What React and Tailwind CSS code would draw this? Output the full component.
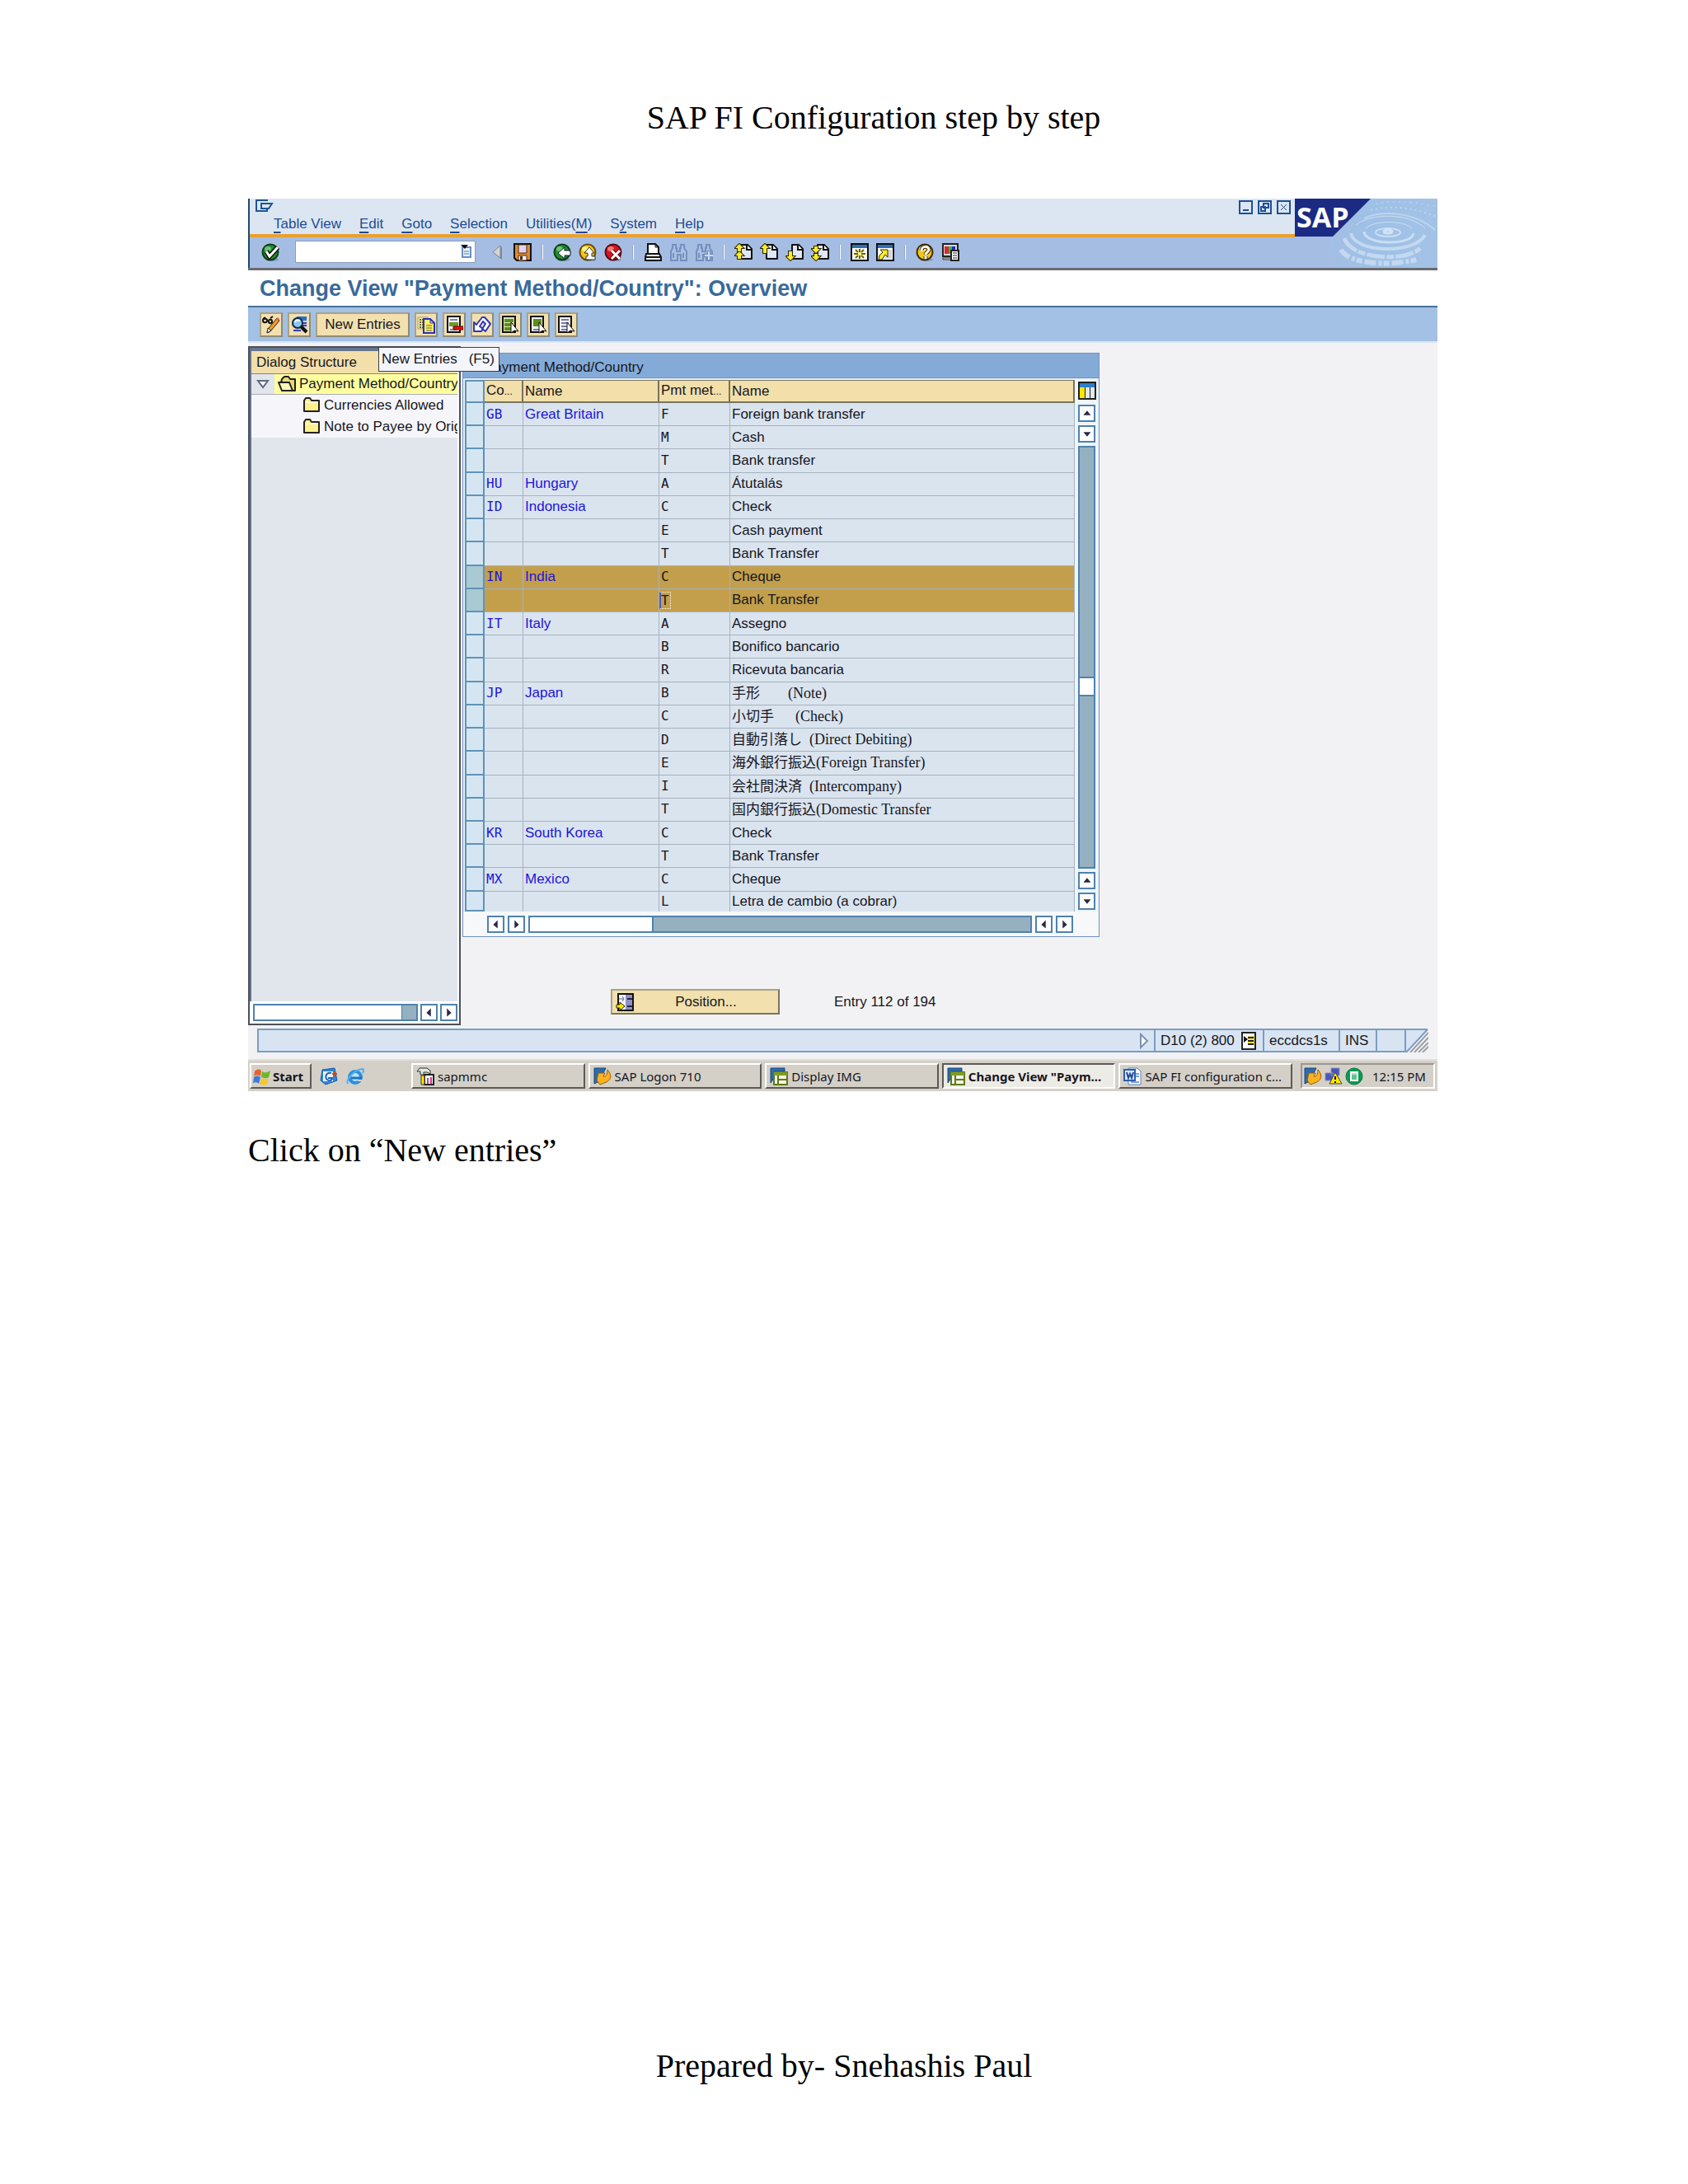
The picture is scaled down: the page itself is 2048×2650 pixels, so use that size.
import React from 'react';

const menus = [
  ['', 'T', 'able View'],
  ['', 'E', 'dit'],
  ['', 'G', 'oto'],
  ['', 'S', 'election'],
  ['Utilities(', 'M', ')'],
  ['S', 'y', 'stem'],
  ['', 'H', 'elp'],
];

const rows = [
  { code: 'GB', country: 'Great Britain', method: 'F', name: 'Foreign bank transfer' },
  { method: 'M', name: 'Cash' },
  { method: 'T', name: 'Bank transfer' },
  { code: 'HU', country: 'Hungary', method: 'A', name: 'Átutalás' },
  { code: 'ID', country: 'Indonesia', method: 'C', name: 'Check' },
  { method: 'E', name: 'Cash payment' },
  { method: 'T', name: 'Bank Transfer' },
  { code: 'IN', country: 'India', method: 'C', name: 'Cheque', selected: true },
  { method: 'T', name: 'Bank Transfer', selected: true, cursor: true },
  { code: 'IT', country: 'Italy', method: 'A', name: 'Assegno' },
  { method: 'B', name: 'Bonifico bancario' },
  { method: 'R', name: 'Ricevuta bancaria' },
  { code: 'JP', country: 'Japan', method: 'B', cjk: '手形　　', name: '(Note)' },
  { method: 'C', cjk: '小切手　', name: '  (Check)' },
  { method: 'D', cjk: '自動引落し', name: '  (Direct Debiting)' },
  { method: 'E', cjk: '海外銀行振込', name: '(Foreign Transfer)' },
  { method: 'I', cjk: '会社間決済', name: '  (Intercompany)' },
  { method: 'T', cjk: '国内銀行振込', name: '(Domestic Transfer' },
  { code: 'KR', country: 'South Korea', method: 'C', name: 'Check' },
  { method: 'T', name: 'Bank Transfer' },
  { code: 'MX', country: 'Mexico', method: 'C', name: 'Cheque' },
  { method: 'L', name: 'Letra de cambio (a cobrar)' },
];

const Icon = ({ children }) => (
  <svg viewBox="0 0 22 22" className="block h-[22px] w-[22px] shrink-0">
    {children}
  </svg>
);

/* Shared shapes */
const Page = () => (
  <>
    <path
      d="M8 2h8l5 5v12h-13z"
      fill="#dfe6f6"
      stroke="#111"
      strokeWidth="2"
      strokeLinejoin="round"
    />
    <path d="M15 2v6h6" fill="#fff" stroke="#111" strokeWidth="2" />
  </>
);

const Ball = ({ fill, shade, light }) => (
  <>
    <ellipse cx="13" cy="20" rx="8" ry="2" fill="#6f87b4" opacity="0.6" />
    <circle cx="11" cy="11" r="9.5" fill={fill} stroke={shade} strokeWidth="2" />
    <ellipse cx="8" cy="7" rx="4" ry="3" fill={light} />
  </>
);

const Binoculars = () => (
  <path
    d="M4 2h4v4h1v4h4v-4h1v-4h4v4l3 4v11h-7v-7h-4v7h-8v-11l2-4zM5 12v6M17 12v6"
    fill="#a9c0e4"
    stroke="#7590bd"
    strokeWidth="2"
  />
);

const Arrow = ({ d }) => (
  <path d={d} fill="#ffe92b" stroke="#2c2700" strokeWidth="2" paintOrder="stroke" />
);

const Cursor = () => (
  <path d="M12 8v13l4-3 5 1z" fill="#fff" stroke="#111" strokeLinejoin="round" />
);

const icons = {
  enter: (
    <Icon>
      <Ball fill="#1f8f2d" shade="#0d3f16" light="#6cc46e" />
      <path d="M6 10l4 6 10-11" fill="none" stroke="#111" strokeWidth="6" />
      <path d="M6 10l4 6 10-11" fill="none" stroke="#fff" strokeWidth="3" />
    </Icon>
  ),
  collapse: (
    <Icon>
      <path d="M17 4v16l-10-8z" fill="#7d8894" />
      <path d="M15 3v15l-9-7z" fill="#d6d6d0" stroke="#7f858f" />
    </Icon>
  ),
  save: (
    <Icon>
      <path d="M1 1h20v20h-17l-3-3z" fill="#e08a2c" stroke="#111" strokeWidth="2" />
      <path d="M6 2h10v10h-10z" fill="#e3d3ea" stroke="#4a2a10" />
      <path d="M6 15h10v6h-10z" fill="#f3eef5" stroke="#4a2a10" />
      <path d="M8 16h3v4h-3z" fill="#4a2a10" />
    </Icon>
  ),
  back: (
    <Icon>
      <Ball fill="#1f8f2d" shade="#0d3f16" light="#6cc46e" />
      <path d="M6 12l8-7v4h7v6h-7v4z" fill="#fff" stroke="#123" strokeWidth="1" />
    </Icon>
  ),
  exit: (
    <Icon>
      <Ball fill="#f3c517" shade="#6b4a0a" light="#fff08a" />
      <path d="M13 5l6 7h-3v4h4v4h-11v-4h2v-4h-4z" fill="#fff" stroke="#332" />
    </Icon>
  ),
  cancel: (
    <Icon>
      <Ball fill="#d81420" shade="#5c0a10" light="#f47a72" />
      <path d="M9 9l10 10M19 9l-10 10" stroke="#5c0a10" strokeWidth="5" />
      <path d="M9 9l10 10M19 9l-10 10" stroke="#fff" strokeWidth="3" />
    </Icon>
  ),
  print: (
    <Icon>
      <path d="M5 13v-12h9l4 4v8" fill="#fff" stroke="#111" strokeWidth="2" />
      <path d="M14 1v4h4" fill="none" stroke="#111" />
      <path d="M3 13h16l2 4v4h-19v-4z" fill="#f5f5f5" stroke="#111" strokeWidth="2" />
      <path d="M2 17h18" stroke="#111" strokeWidth="2" />
    </Icon>
  ),
  find: (
    <Icon>
      <Binoculars />
    </Icon>
  ),
  findNext: (
    <Icon>
      <Binoculars />
      <path d="M17 9v12M11 15h11" stroke="#7590bd" strokeWidth="5" />
      <path d="M17 10v10M12 15h10" stroke="#cddaf0" strokeWidth="2" />
    </Icon>
  ),
  firstPage: (
    <Icon>
      <Page />
      <Arrow d="M6 10l5 5h-3v4h-4v-4h-3z" />
      <Arrow d="M6 1l5 5h-3v4h-4v-4h-3z" />
    </Icon>
  ),
  prevPage: (
    <Icon>
      <Page />
      <Arrow d="M6 1l5 5h-3v6h-4v-6h-3z" />
    </Icon>
  ),
  nextPage: (
    <Icon>
      <Page />
      <Arrow d="M6 21l5-5h-3v-6h-4v6h-3z" />
    </Icon>
  ),
  lastPage: (
    <Icon>
      <Page />
      <Arrow d="M6 12l5-5h-3v-3h-4v3h-3z" />
      <Arrow d="M6 21l5-5h-3v-3h-4v3h-3z" />
    </Icon>
  ),
  session: (
    <Icon>
      <path d="M1 1h20v20h-20z" fill="#fffef0" stroke="#111" strokeWidth="2" />
      <path d="M2 2h18v4h-18z" fill="#2f6fb4" />
      <path d="M11 7v4M11 15v4M4 13h5M13 13h5M6 8l3 3M13 15l3 3M16 8l-3 3M9 15l-3 3" stroke="#6b6300" strokeWidth="2" />
      <path d="M9 11h4v4h-4z" fill="#fff27a" />
    </Icon>
  ),
  shortcut: (
    <Icon>
      <path d="M1 1h20v20h-20z" fill="#fff" stroke="#111" strokeWidth="2" />
      <path d="M2 2h18v4h-18z" fill="#2f6fb4" />
      <path d="M14 8h5v11h-8v-3h3z" fill="#d4d6da" />
      <path d="M5 8h9v9l-3-3-4 6h-4l1-5 4-4z" fill="#ffe92b" stroke="#332c00" />
    </Icon>
  ),
  help: (
    <Icon>
      <Ball fill="#f5c61a" shade="#3d2c04" light="#fff08a" />
      <path
        d="M7 9c0-6 9-6 9-1 0 3-4 3-4 6M12 16v3"
        fill="none"
        stroke="#3d2c04"
        strokeWidth="5"
      />
      <path
        d="M7 9c0-6 9-6 9-1 0 3-4 3-4 6M12 16v3"
        fill="none"
        stroke="#fff"
        strokeWidth="3"
      />
    </Icon>
  ),
  layout: (
    <Icon>
      <path d="M2 1h18v15h-18z" fill="#d6d9dd" stroke="#222" strokeWidth="2" />
      <path d="M4 4h5v9h-5z" fill="#e0252b" />
      <path d="M9 4h4v9h-4z" fill="#1fc43a" />
      <path d="M13 4h4v9h-4z" fill="#2222e0" />
      <path d="M2 18h11v2h-11z" fill="#e6e6e6" stroke="#333" />
      <path d="M12 9h9v12h-9z" fill="#fff" stroke="#222" strokeWidth="2" />
      <path d="M14 12h5M14 15h5M14 18h5" stroke="#222" />
    </Icon>
  ),
  change: (
    <Icon>
      <path
        d="M1 4l3-2M1 6c0-3 5-3 5 0s-5 3-5 0M8 7c0-3 4-3 4 0s-4 3-4 0M10 3l3-2"
        fill="none"
        stroke="#111"
        strokeWidth="2"
      />
      <path d="M18 3l3 3-10 12-4 3-1-1 2-5z" fill="#f39a2b" stroke="#222" />
      <path d="M17 4l3 3 1-3-2-2z" fill="#e25b5b" />
      <path d="M7 15l4 3-5 3z" fill="#fff" stroke="#222" />
    </Icon>
  ),
  details: (
    <Icon>
      <path d="M6 1h15v19h-15z" fill="#d8d3d4" />
      <path d="M8 1h12v5h-12z" fill="#2a72c8" />
      <path d="M15 9h5M15 12h5M4 18h9" stroke="#3a3fb5" strokeWidth="2" />
      <circle cx="9" cy="9" r="6" fill="#8dc8ee" stroke="#14284a" strokeWidth="2" />
      <path d="M6 8c1-3 4-3 6-2" fill="none" stroke="#fff" strokeWidth="2" />
      <path d="M13 13l7 7" stroke="#111" strokeWidth="4" />
    </Icon>
  ),
  copy: (
    <Icon>
      <path d="M1 2h12v14h-12z" fill="#f7f0a0" stroke="#a39a60" />
      <path d="M3 5h6M3 8h5M3 11h5M3 14h5" stroke="#6a6238" strokeWidth="2" strokeDasharray="2 1" />
      <path d="M8 4h8l5 5v12h-13z" fill="#fbf25e" stroke="#2730c8" strokeWidth="2" />
      <path d="M16 4v5h5" fill="none" stroke="#2730c8" />
      <path d="M11 12h7M11 15h7M11 18h7" stroke="#6a6238" />
    </Icon>
  ),
  remove: (
    <Icon>
      <path d="M3 1h15v19h-15z" fill="#f4f4fb" stroke="#111" strokeWidth="2" />
      <path d="M6 5h9" stroke="#8086b5" strokeWidth="2" />
      <path d="M5 8h11v5h-11z" fill="#6f9a1e" />
      <path d="M6 17h8" stroke="#8086b5" strokeWidth="2" />
      <path d="M10 13h12v4h-12z" fill="#e31212" stroke="#6d0505" />
    </Icon>
  ),
  undo: (
    <Icon>
      <path
        d="M1 19v-11l3 3 7-9h3l7 8-6 9-4-3 4-6-3-3-4 6 4 3-2 3z"
        fill="#fff"
        stroke="#3236b5"
        strokeWidth="2"
        strokeLinejoin="round"
      />
    </Icon>
  ),
  selectAll: (
    <Icon>
      <path d="M2 1h15v19h-15z" fill="#dfe7c0" stroke="#111" strokeWidth="2" />
      <path d="M4 4h11v4h-11zM4 9h11v4h-11zM4 14h11v4h-11z" fill="#5e8f16" />
      <Cursor />
    </Icon>
  ),
  selectBlock: (
    <Icon>
      <path d="M2 1h15v19h-15z" fill="#f1f2fa" stroke="#111" strokeWidth="2" />
      <path d="M5 4h10v9h-10z" fill="#5e8f16" />
      <path d="M5 17h7" stroke="#777da8" strokeWidth="2" />
      <Cursor />
    </Icon>
  ),
  deselect: (
    <Icon>
      <path d="M2 1h15v19h-15z" fill="#f1f2fa" stroke="#111" strokeWidth="2" />
      <path d="M5 5h9M5 9h9M5 13h7M5 17h7" stroke="#777da8" strokeWidth="2" />
      <Cursor />
    </Icon>
  ),
  columns: (
    <Icon>
      <path d="M0 0h22v22h-22z" fill="#222" />
      <path d="M2 2h18v5h-18z" fill="#2f7fc9" />
      <path d="M2 7h6v13h-6z" fill="#ffe600" />
      <path d="M9 7h5v13h-5zM15 7h5v13h-5z" fill="#e3e6ea" />
    </Icon>
  ),
  position: (
    <Icon>
      <path d="M3 1h18v20h-18z" fill="#8f90c4" stroke="#111" strokeWidth="2" />
      <path d="M4 2h8v18h-8z" fill="#f2f3fa" />
      <path d="M4 7h6l-2-3M10 7l-2 3" fill="none" stroke="#667" />
      <path d="M14 7h6M14 16h6" stroke="#22244d" strokeWidth="2" />
      <path d="M1 14h4v-3l6 5-6 5v-3h-4z" fill="#ffe600" stroke="#222" />
    </Icon>
  ),
  folder: (
    <Icon>
      <path
        d="M2 18v-13l2-3h5l2 3h9v13z"
        fill="#fff08c"
        stroke="#222"
        strokeWidth="2"
        strokeLinejoin="round"
      />
      <path d="M4 7h14" stroke="#fffbd0" strokeWidth="2" />
    </Icon>
  ),
  folderOpen: (
    <Icon>
      <path
        d="M4 9l1-4 3-3h5l2 3h6v14h-3"
        fill="#e9d978"
        stroke="#222"
        strokeWidth="2"
        strokeLinejoin="round"
      />
      <path
        d="M1 9h13l4 10h-13z"
        fill="#fff9b8"
        stroke="#222"
        strokeWidth="2"
        strokeLinejoin="round"
      />
    </Icon>
  ),
  windows: (
    <Icon>
      <path d="M2 5c3-3 5-3 8-1l-1 7c-3-2-5-2-8 0z" fill="#e8622c" />
      <path d="M11 5c3 2 6 2 10-1l-2 8c-3 2-6 1-9 0z" fill="#6fb52c" />
      <path d="M1 12c3-2 5-2 8 0l-2 8c-2-2-4-2-7-1z" fill="#3b7be0" />
      <path d="M10 13c3 1 5 2 9 0l-2 7c-3 2-5 2-9 0z" fill="#f6c62c" />
    </Icon>
  ),
  outlook: (
    <Icon>
      <path d="M3 3l15-2 3 15-14 5-6-5z" fill="#2f85d3" stroke="#1b5ea8" />
      <path d="M4 5h12v12h-12z" fill="#e8f3fc" />
      <path d="M14 7c-8-2-9 9-2 9 2 0 3-1 3-3h-5" fill="none" stroke="#1b66b8" strokeWidth="2" />
      <path d="M18 5v6M15 8h6" stroke="#b4542c" strokeWidth="2" />
    </Icon>
  ),
  explorer: (
    <Icon>
      <circle cx="11" cy="12" r="7" fill="#bfe3fa" stroke="#2b8fdd" strokeWidth="4" />
      <path d="M6 13h13" stroke="#1c74c4" strokeWidth="3" />
      <path d="M14 15h7v2h-7z" fill="#d4d0c8" />
      <path d="M2 20c-3-6 10-18 18-18 2 1 1 3 0 5" fill="none" stroke="#56b0ec" strokeWidth="2" />
    </Icon>
  ),
  tools: (
    <Icon>
      <path d="M1 5l3-4h9l4 3v4l-4-2h-4v3h-4v-4z" fill="#e4e4e0" stroke="#333" />
      <path d="M10 9h11v12h-11z" fill="#fff" stroke="#222" strokeWidth="2" />
      <path d="M14 13v7M18 12v8" stroke="#d33a8a" strokeWidth="2" />
      <path d="M6 10h4v11h-4z" fill="#ffe600" stroke="#333" />
    </Icon>
  ),
  logon: (
    <Icon>
      <path d="M1 1h14l-8 16-6 3z" fill="#2d6bab" stroke="#184a80" />
      <path
        d="M6 7h8l-2 4c3 1 5-2 5-8 6 7 5 13-4 16l-5 2-4-5z"
        fill="#fbb21e"
        stroke="#9b5d06"
      />
    </Icon>
  ),
  sapWindow: (
    <Icon>
      <path d="M1 1h17v4h-13v8l-4 6z" fill="#2d6bab" stroke="#184a80" />
      <path d="M5 6h16v15h-16z" fill="#f6f7e6" stroke="#5d7a17" strokeWidth="2" />
      <path d="M5 6h16v4h-16z" fill="#7d9c26" />
      <path d="M10 10v11M10 15h11" stroke="#5d7a17" strokeWidth="2" />
    </Icon>
  ),
  word: (
    <Icon>
      <path d="M6 1h11l4 4v16h-15z" fill="#fff" stroke="#5b80bd" />
      <path d="M13 8h6M13 11h6M9 18h10" stroke="#7ea0d4" strokeWidth="2" />
      <path d="M1 3h13v13h-13z" fill="#dfeafa" stroke="#2b5fae" strokeWidth="2" />
      <path d="M4 6l2 7 2-5 2 5 2-7" fill="none" stroke="#1d4a94" strokeWidth="2" />
    </Icon>
  ),
  network: (
    <Icon>
      <path d="M8 1h10v9h-10zM1 7h10v9h-10z" fill="#4a55b8" stroke="#8a90c8" />
      <path d="M13 6l8 14h-15z" fill="#ffe600" stroke="#444" />
      <path d="M13 11v4M13 17v2" stroke="#111" strokeWidth="2" />
    </Icon>
  ),
  server: (
    <Icon>
      <circle cx="11" cy="11" r="10" fill="#0d9a52" stroke="#087a3e" />
      <path d="M7 6h8v10h-8z" fill="#5fc48e" stroke="#fff" strokeWidth="2" />
      <path d="M7 8h8" stroke="#fff" />
    </Icon>
  ),
};

const IconButton = ({ name }) => (
  <button type="button" aria-label={name} className="block">
    {icons[name]}
  </button>
);

const ToolButton = ({ name }) => (
  <button
    type="button"
    aria-label={name}
    className="flex h-[30px] w-7 items-center justify-center border-2 border-[#8f8a78] border-t-[#a9a28a] border-l-[#a9a28a] bg-[#f2e0ae]"
  >
    {icons[name]}
  </button>
);

const Separator = () => (
  <span className="mx-[3px] h-[18px] w-0.5 border-r border-white bg-[#98a5bd]" />
);

const arrows = {
  up: 'M5 12l5-6 5 6z',
  down: 'M5 7l5 6 5-6z',
  left: 'M12 4v11l-6-5z',
  right: 'M7 4v11l6-5z',
};

const ScrollButton = ({ dir }) => (
  <button
    type="button"
    aria-label={`Scroll ${dir}`}
    className="h-[21px] w-[21px] shrink-0 border-2 border-[#4f82ad] bg-white"
  >
    <svg viewBox="0 0 19 19" className="block h-[17px] w-[17px]">
      <path d={arrows[dir]} fill="#2a2a44" />
    </svg>
  </button>
);

const Ripples = () => (
  <svg
    viewBox="0 0 173 84"
    className="block h-[84px] w-[173px] shrink-0"
    role="img"
    aria-label="SAP"
  >
    <defs>
      <linearGradient id="water" x1="0" y1="0" x2="1" y2="0">
        <stop offset="0.2" stopColor="#a5bde3" />
        <stop offset="0.5" stopColor="#9fc0e6" />
        <stop offset="1" stopColor="#a3c2e6" />
      </linearGradient>
    </defs>
    <rect width="173" height="84" fill="url(#water)" />
    <g fill="none" stroke="#e6f2fc">
      <ellipse cx="113" cy="40" rx="5" ry="2" strokeWidth="3" opacity="0.7" />
      <ellipse cx="113" cy="41" rx="15" ry="5" strokeWidth="2" opacity="0.6" />
      <path d="M84 40c0 16 58 18 60 2" strokeWidth="3" opacity="0.6" />
      <path d="M86 36c10-10 46-10 56 0" strokeWidth="1" opacity="0.6" />
      <path d="M68 42c4 24 78 26 90 2" strokeWidth="4" opacity="0.5" />
      <path
        d="M60 48c10 28 78 28 92 12"
        strokeWidth="5"
        opacity="0.5"
        strokeDasharray="22 2 9 2"
      />
      <path
        d="M56 62c10 18 60 20 92 12"
        strokeWidth="6"
        opacity="0.5"
        strokeDasharray="14 3 4 2 7 3"
      />
      <path d="M74 32c16-14 64-16 84 4" strokeWidth="1" opacity="0.6" />
      <path d="M84 24c20-10 60-9 86 14" strokeWidth="2" opacity="0.4" />
      <path d="M92 14c24-6 50-4 80 8" strokeWidth="2" opacity="0.4" strokeDasharray="2 4" />
      <path d="M98 6c24-4 50-2 74 4" strokeWidth="2" opacity="0.3" strokeDasharray="2 5" />
    </g>
    <path d="M0 0h92l-46 46h-46z" fill="#1b2a83" />
    <text
      x="2"
      y="35"
      fill="#fff"
      fontFamily="'Open Sans', sans-serif"
      fontSize="34"
      fontWeight="700"
    >
      SAP
    </text>
  </svg>
);

const Header = () => (
  <header className="flex border-l-2 border-[#1d4a70] bg-[#a5bde3]">
    <div className="flex-1">
      <div className="flex h-[47px] justify-between border-b-4 border-[#e9a12f] bg-[#dbe6f2]">
        <div>
          <svg viewBox="0 0 24 17" className="ml-1.5 block h-[17px] w-6">
            <path
              d="M15 3v-1h-13v13h13v-2M8 6h13l-4 6h-9z"
              fill="none"
              stroke="#1f5592"
              strokeWidth="2"
            />
          </svg>
          <nav className="ml-[29px] flex gap-[22px] text-[17px] leading-7 text-[#1d4b94]">
            {menus.map(([before, key, after]) => (
              <button key={before + key + after} type="button" className="block">
                {before}
                <span className="underline decoration-2 underline-offset-4">{key}</span>
                {after}
              </button>
            ))}
          </nav>
        </div>
        <div className="mt-0.5 mr-[5px] flex gap-1.5">
          <button type="button" aria-label="Minimize" className="h-[17px] w-[17px] border-2 border-[#1f4f92]">
            <svg viewBox="0 0 13 13" className="block h-[13px] w-[13px]">
              <path d="M3 9h7v2h-7z" fill="#1f4f92" />
            </svg>
          </button>
          <button type="button" aria-label="Restore" className="h-[17px] w-[17px] border-2 border-[#1f4f92]">
            <svg viewBox="0 0 13 13" className="block h-[13px] w-[13px]">
              <path d="M5 2h6v5h-6zM2 6h5v5h-5z" fill="none" stroke="#1f4f92" strokeWidth="2" />
            </svg>
          </button>
          <button type="button" aria-label="Close" className="h-[17px] w-[17px] border-2 border-[#1f4f92]">
            <svg viewBox="0 0 13 13" className="block h-[13px] w-[13px]">
              <path d="M3 3l7 7M10 3l-7 7" stroke="#1f4f92" />
            </svg>
          </button>
        </div>
      </div>
      <div className="flex h-[37px] items-center gap-[9px] pb-0.5 pl-3.5">
        <IconButton name="enter" />
        <div className="relative mr-1.5 ml-2.5">
          <input
            type="text"
            aria-label="Command"
            className="block h-[27px] w-[219px] border border-[#8c9bb5] bg-white px-1 text-[17px]"
          />
          <button type="button" aria-label="History" className="absolute top-1 right-1">
            <svg viewBox="0 0 16 18" className="block h-[18px] w-4">
              <path d="M4 4h10v12h-10z" fill="#eaf1fa" stroke="#6a8fc0" strokeWidth="2" />
              <path d="M6 9h6M6 12h6" stroke="#4878b4" />
              <path d="M2 1h9l-4 5z" fill="#111" />
            </svg>
          </button>
        </div>
        <IconButton name="collapse" />
        <IconButton name="save" />
        <Separator />
        <IconButton name="back" />
        <IconButton name="exit" />
        <IconButton name="cancel" />
        <Separator />
        <IconButton name="print" />
        <IconButton name="find" />
        <IconButton name="findNext" />
        <Separator />
        <IconButton name="firstPage" />
        <IconButton name="prevPage" />
        <IconButton name="nextPage" />
        <IconButton name="lastPage" />
        <Separator />
        <IconButton name="session" />
        <IconButton name="shortcut" />
        <Separator />
        <IconButton name="help" />
        <IconButton name="layout" />
      </div>
    </div>
    <Ripples />
  </header>
);

const DialogStructure = () => (
  <aside className="flex w-[258px] shrink-0 flex-col border-2 border-[#4c5058] bg-white pr-0.5">
    <div className="flex flex-1 flex-col border-t-4 border-l-2 border-[#66758f] bg-[#e1e5ec]">
      <h2 className="h-7 border-b border-[#8d8672] bg-[#f2dfaa] pl-1.5 leading-7">
        Dialog Structure
      </h2>
      <ul>
        <li className="flex h-[25px] items-center border-b border-[#a9acb2]">
          <button type="button" aria-label="Collapse" className="flex w-7 justify-center">
            <svg viewBox="0 0 16 12" className="h-3 w-4">
              <path d="M2 2h12l-6 8z" fill="#fff" stroke="#5c6a80" strokeWidth="2" />
            </svg>
          </button>
          <a
            href="#method"
            className="flex h-6 w-0 flex-1 items-center gap-1 overflow-hidden bg-[#ffff9e] pl-1 whitespace-nowrap"
          >
            {icons.folderOpen}
            Payment Method/Country
          </a>
        </li>
        {['Currencies Allowed', 'Note to Payee by Origin'].map((item) => (
          <li key={item} className="flex h-[26px] bg-[#f6f6fa]">
            <a
              href="#node"
              className="flex w-0 flex-1 items-center gap-1 overflow-hidden pl-[62px] whitespace-nowrap"
            >
              {icons.folder}
              {item}
            </a>
          </li>
        ))}
      </ul>
    </div>
    <div className="flex h-[27px] items-center gap-[3px] pl-1">
      <div className="flex h-[21px] flex-1 justify-end border-2 border-[#4f82ad] bg-white">
        <div className="w-[18px] border-l border-[#4f82ad] bg-[#95b1c1]" />
      </div>
      <ScrollButton dir="left" />
      <ScrollButton dir="right" />
    </div>
  </aside>
);

const headCell =
  'border-r-2 border-b-2 border-[#77745f] border-t border-t-[#77745f] bg-[#f2dfaa] p-0 pl-0.5 text-left font-normal';

const MethodTable = () => (
  <table className="h-[645px] w-full flex-1 table-fixed border-separate border-spacing-0">
    <colgroup>
      <col className="w-6" />
      <col className="w-[47px]" />
      <col className="w-[165px]" />
      <col className="w-[86px]" />
      <col />
    </colgroup>
    <thead>
      <tr className="h-[27px]">
        <th className="border-2 border-[#5f93b8] bg-[#d5e6f2] p-0" aria-label="Select" />
        <th className={headCell}>
          Co<span className="text-[12px]">...</span>
        </th>
        <th className={headCell}>Name</th>
        <th className={headCell}>
          Pmt met<span className="text-[12px]">...</span>
        </th>
        <th className={headCell}>Name</th>
      </tr>
    </thead>
    <tbody>
      {rows.map((row, i) => {
        const last = i === rows.length - 1;
        const cell = `border-r border-[#a6b2bd] p-0 pl-0.5 ${last ? '' : 'border-b'}`;
        return (
          <tr
            key={i}
            className={`${last ? 'h-6' : 'h-7'} ${row.selected ? 'bg-[#c39f4b]' : 'bg-[#dae4ef]'}`}
          >
            <td
              className={`border-x-2 border-b-2 border-[#5f93b8] p-0 ${
                row.selected ? 'bg-[#a9cad3]' : 'bg-[#d5e6f2]'
              }`}
            />
            <td className={`${cell} font-['DejaVu_Sans_Mono',monospace] text-[16px] text-[#2014dc]`}>
              {row.code}
            </td>
            <td className={`${cell} text-[#2014dc]`}>{row.country}</td>
            {row.cursor ? (
              <td className="border-r border-b border-[#a6b2bd] p-0 font-['DejaVu_Sans_Mono',monospace] text-[16px]">
                <span className="block h-[21px] w-3.5 border border-l-2 border-dotted border-white border-l-[#3f5fc0] leading-[19px] [border-left-style:solid]">
                  {row.method}
                </span>
              </td>
            ) : (
              <td className={`${cell} font-['DejaVu_Sans_Mono',monospace] text-[16px]`}>
                {row.method}
              </td>
            )}
            {row.cjk ? (
              <td className={`${cell} font-['Liberation_Serif','Noto_Sans_CJK_JP',serif] whitespace-pre`}>
                {row.cjk}
                <span className="text-[18px]">{row.name}</span>
              </td>
            ) : (
              <td className={cell}>{row.name}</td>
            )}
          </tr>
        );
      })}
    </tbody>
  </table>
);

const TablePanel = () => (
  <section className="w-[773px] border border-[#6f93b8] bg-[#f6f8fa]">
    <h2 className="h-[30px] border-b border-[#6f93b8] bg-[#84abd8] pl-[26px] leading-[34px]">
      Payment Method/Country
    </h2>
    <div className="flex bg-[#e4effa] pt-0.5 pl-0.5">
      <MethodTable />
      <div className="flex w-[29px] flex-col items-center gap-1 bg-[#eef5fb]">
        <div className="mt-0.5 mb-0.5">
          <IconButton name="columns" />
        </div>
        <ScrollButton dir="up" />
        <ScrollButton dir="down" />
        <div className="w-[21px] flex-1 border-2 border-[#4f82ad] bg-[#95b1c1] pt-[278px]">
          <div className="h-6 border-y-2 border-[#4f82ad] bg-white" />
        </div>
        <ScrollButton dir="up" />
        <ScrollButton dir="down" />
        <span className="-mt-0.5" />
      </div>
    </div>
    <div className="flex h-[30px] items-center gap-1 pr-[31px] pl-[29px]">
      <ScrollButton dir="left" />
      <ScrollButton dir="right" />
      <div className="flex h-[21px] flex-1 border-2 border-[#4f82ad] bg-[#95b1c1]">
        <div className="w-[150px] border-r-2 border-[#4f82ad] bg-white" />
      </div>
      <ScrollButton dir="left" />
      <ScrollButton dir="right" />
    </div>
  </section>
);

const statusCell = 'flex items-center border-l-2 border-[#7b9cc4] pl-1.5';

const StatusBar = () => (
  <div className="mt-1 flex h-[29px] pr-[11px] pl-[11px]">
    <div className="flex flex-1 border-y-2 border-l-2 border-[#7b9cc4] bg-[#d8e4f1]">
      <div className="flex flex-1 items-center justify-end pr-1.5">
        <svg viewBox="0 0 12 20" className="h-5 w-3">
          <path d="M2 2v16l8-8z" fill="#fff" stroke="#7b93b5" strokeWidth="2" />
        </svg>
      </div>
      <div className={`${statusCell} w-[132px] gap-2`}>
        D10 (2) 800
        <svg viewBox="0 0 18 22" className="h-[22px] w-[18px]">
          <path d="M1 1h16v20h-16z" fill="#fff" stroke="#222" strokeWidth="2" />
          <path d="M8 5h8v11h-8z" fill="#f4e34a" />
          <path d="M8 7h7M8 11h7M8 15h7" stroke="#222" strokeWidth="2" />
          <path d="M3 5v8l5-4z" fill="#111" />
        </svg>
      </div>
      <div className={`${statusCell} w-[92px]`}>eccdcs1s</div>
      <div className={`${statusCell} w-[45px]`}>INS</div>
      <div className={`${statusCell} w-[35px]`} />
    </div>
    <svg viewBox="0 0 29 29" className="h-[29px] w-[29px]">
      <path d="M0 0h28l-26 29h-2z" fill="#d8e4f1" />
      <path d="M0 1h28M1 0v28h2L28 1" fill="none" stroke="#7b9cc4" strokeWidth="2" />
      <path d="M7 29L29 5M12 29L29 11M17 29L29 17M22 29L29 22" stroke="#9aa0a8" strokeWidth="2" />
    </svg>
  </div>
);

const tasks = [
  { icon: 'tools', label: 'sapmmc' },
  { icon: 'logon', label: 'SAP Logon 710' },
  { icon: 'sapWindow', label: 'Display IMG' },
  { icon: 'sapWindow', label: 'Change View "Paym...', active: true },
  { icon: 'word', label: 'SAP FI configuration c...' },
];

const Taskbar = () => (
  <div className="mt-2 flex h-[39px] items-center border-t-2 border-[#e2e0da] bg-[#d4d0c8] pr-[3px] pl-0.5 font-['Noto_Sans',sans-serif] text-[15px]">
    <button
      type="button"
      className="flex h-[31px] w-[75px] items-center gap-0.5 border-2 border-[#5c5a56] border-t-white border-l-white pl-0.5 font-bold"
    >
      {icons.windows}
      Start
    </button>
    <div className="ml-2.5 flex w-[111px] gap-2.5">
      <IconButton name="outlook" />
      <IconButton name="explorer" />
    </div>
    <div className="flex flex-1 gap-1">
      {tasks.map((task) => (
        <button
          key={task.label}
          type="button"
          className={`flex h-[31px] w-0 flex-1 items-center gap-1 overflow-hidden border-2 pl-1 whitespace-nowrap ${
            task.active
              ? 'border-white border-t-[#5c5a56] border-l-[#5c5a56] bg-[#edebe6] font-bold'
              : 'border-[#5c5a56] border-t-white border-l-white'
          }`}
        >
          {icons[task.icon]}
          {task.label}
        </button>
      ))}
    </div>
    <div className="ml-2.5 flex h-[31px] w-[163px] items-center gap-[3px] border-2 border-white border-t-[#9a978f] border-l-[#9a978f] pl-0.5">
      {icons.logon}
      {icons.network}
      {icons.server}
      <span className="ml-2">12:15 PM</span>
    </div>
  </div>
);

const SapWindow = () => (
  <div className="bg-[#f2f2f4] font-['Liberation_Sans',Arial,sans-serif] text-[17px] leading-6 text-[#16161e]">
    <Header />
    <h1 className="h-[46px] border-t-[3px] border-[#6a6a70] bg-white pl-3.5 text-[27px] leading-[44px] font-bold text-[#386a9a]">
      Change View "Payment Method/Country": Overview
    </h1>
    <div className="relative flex h-[45px] items-center gap-1.5 border-t-2 border-b-2 border-t-[#44719a] border-b-[#dce6f2] bg-[#a3c1e4] pl-3.5">
      <ToolButton name="change" />
      <ToolButton name="details" />
      <button
        type="button"
        className="h-[30px] w-[114px] border-2 border-[#8f8a78] border-t-[#a9a28a] border-l-[#a9a28a] bg-[#f2e0ae]"
      >
        New Entries
      </button>
      <ToolButton name="copy" />
      <ToolButton name="remove" />
      <ToolButton name="undo" />
      <ToolButton name="selectAll" />
      <ToolButton name="selectBlock" />
      <ToolButton name="deselect" />
      <div
        role="tooltip"
        className="absolute top-[48px] left-[158px] z-10 flex h-[30px] w-[147px] items-center gap-3.5 border border-[#3c3f46] bg-[#f4f5fa] pl-[3px]"
      >
        <span>New Entries</span>
        <span>(F5)</span>
      </div>
    </div>
    <div className="flex pt-1">
      <DialogStructure />
      <div className="flex-1 pt-2 pl-0.5">
        <TablePanel />
        <div className="flex items-center gap-[66px] pt-[63px] pb-[13px] pl-[180px]">
          <button
            type="button"
            className="flex h-[31px] w-[205px] items-center border-2 border-[#77745f] border-t-[#a9a28a] border-l-[#a9a28a] bg-[#f2e0ae] pl-1"
          >
            {icons.position}
            <span className="flex-1">Position...</span>
          </button>
          <span>Entry 112 of 194</span>
        </div>
      </div>
    </div>
    <StatusBar />
    <Taskbar />
  </div>
);

const App = () => (
  <div className="flex min-h-screen flex-col bg-white pt-[120px] pb-[120px] font-['Liberation_Serif','Times_New_Roman',serif] text-[40px] leading-[46px] text-black">
    <p className="pl-[72px] text-center">SAP FI Configuration step by step</p>
    <main className="mt-[75px] pr-[304px] pl-[301px]">
      <SapWindow />
      <p className="mt-[49px]">Click on “New entries”</p>
    </main>
    <footer className="mt-auto text-center">Prepared by- Snehashis Paul</footer>
  </div>
);

export default App;
